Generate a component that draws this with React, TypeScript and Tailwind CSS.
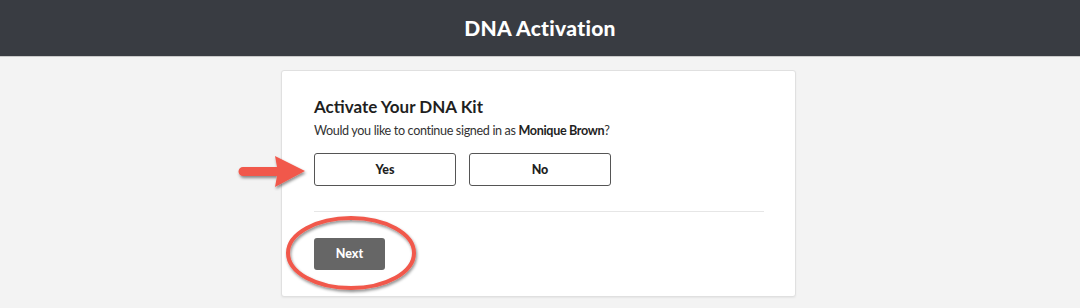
import React from "react";

const font = { fontFamily: '"Lato", "Open Sans", sans-serif' };

function Arrow() {
  return (
    <svg
      className="absolute left-[-48px] top-[82px]"
      width="76"
      height="38"
      viewBox="0 0 76 38"
    >
      <defs>
        <filter id="sh" x="-20%" y="-30%" width="140%" height="160%">
          <feDropShadow dx="1" dy="2" stdDeviation="1.5" floodColor="#000" floodOpacity="0.45" />
        </filter>
      </defs>
      <g filter="url(#sh)">
        <path
          d="M9 14 L43 14 L41 3 L71 18 L41 34 L43 23 L9 23 A4.5 4.5 0 0 1 9 14 Z"
          fill="#f1584b"
          strokeLinejoin="round"
        />
      </g>
    </svg>
  );
}

function Ring() {
  return (
    <svg
      className="absolute left-[1px] top-[143px]"
      width="138"
      height="82"
      viewBox="0 0 138 82"
    >
      <defs>
        <filter id="sh2" x="-10%" y="-10%" width="120%" height="130%">
          <feDropShadow dx="1" dy="2" stdDeviation="1.5" floodColor="#000" floodOpacity="0.45" />
        </filter>
      </defs>
      <ellipse
        cx="68"
        cy="39"
        rx="63"
        ry="35"
        fill="none"
        stroke="#f1584b"
        strokeWidth="4"
        filter="url(#sh2)"
      />
    </svg>
  );
}

export default function App() {
  return (
    <div className="min-h-[308px] bg-[#f3f3f3]" style={font}>
      {/* Header */}
      <div className="h-[57px] bg-[#393c42] border-b border-[#c9c9c9] flex items-center justify-center">
        <h1 className="text-[21px] font-black text-white tracking-[0.3px]">DNA Activation</h1>
      </div>

      {/* Card */}
      <div className="pt-[13px]">
        <div className="relative ml-[281px] w-[515px] rounded-[3px] border border-[#e0e0e0] bg-white px-[32px] pt-[25px] pb-[26px] shadow-[0_1px_2px_rgba(0,0,0,0.06)]">
          <h2 className="text-[17px] leading-[22px] font-bold text-[#1f1f1f]">Activate Your DNA Kit</h2>
          <p className="mt-[3px] text-[12.6px] leading-[20px] tracking-[-0.35px] text-[#333]">
            Would you like to continue signed in as <span className="font-bold text-[#1f1f1f]">Monique Brown</span>?
          </p>

          <div className="mt-[12px] flex gap-[13px]">
            <button
              type="button"
              className="h-[33px] w-[142px] rounded-[3px] border border-[#555] bg-white pt-[2px] text-[12.5px] font-black text-[#1f1f1f]"
            >
              Yes
            </button>
            <button
              type="button"
              className="h-[33px] w-[142px] rounded-[3px] border border-[#555] bg-white pt-[2px] text-[12.5px] font-black text-[#1f1f1f]"
            >
              No
            </button>
          </div>

          <div className="mt-[25px] h-px w-[450px] bg-[#e6e6e6]" />

          <button
            type="button"
            className="mt-[26px] h-[32px] w-[71px] rounded-[3px] bg-[#666666] pt-[1px] text-[12.5px] font-black text-white"
          >
            Next
          </button>

          <Arrow />
          <Ring />
        </div>
      </div>
    </div>
  );
}
